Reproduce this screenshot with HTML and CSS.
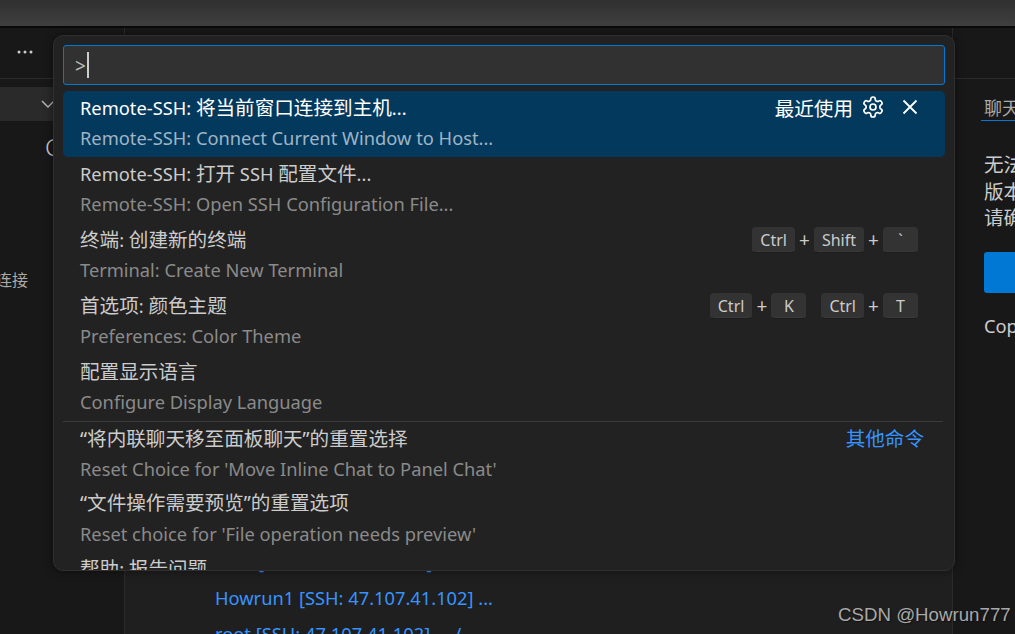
FILE: index.html
```html
<!DOCTYPE html>
<html lang="zh">
<head>
<meta charset="utf-8">
<title>Command Palette</title>
<link rel="stylesheet" href="styles.css">
</head>
<body>
<div class="app">
  <div class="titlebar"></div>
  <div class="workbench">
    <aside class="sidebar">
      <div class="side-head"><svg class="dots" viewBox="0 0 16 4"><circle cx="2" cy="2" r="1.5"/><circle cx="8" cy="2" r="1.5"/><circle cx="14" cy="2" r="1.5"/></svg></div>
      <div class="side-section"><svg class="chev" viewBox="0 0 16 16"><path d="M2 5l6 6 6-6"/></svg></div>
      <div class="side-c">C</div>
      <div class="side-link">连接</div>
    </aside>
    <main class="editor">
      <div class="editor-head"></div>
      <div class="links">
        <div class="link first">[SSH: 47.107.41.102] ...</div>
        <div class="link">Howrun1 [SSH: 47.107.41.102] ...</div>
        <div class="link">root [SSH: 47.107.41.102] ... /</div>
      </div>
    </main>
    <aside class="chat">
      <div class="chat-head"></div>
      <div class="chat-tab">聊天</div>
      <p class="chat-text">无法<br>版本<br>请确</p>
      <div class="chat-btn"></div>
      <p class="chat-cop">Cop</p>
    </aside>
  </div>

  <section class="palette">
    <div class="input"><span class="prompt">&gt;</span><span class="caret"></span></div>
    <div class="list">
      <div class="row selected">
        <div class="line"><span class="title">Remote-SSH: <span class="zh">将当前窗口连接到主机</span>...</span>
          <span class="meta"><span class="zh">最近使用</span>
            <svg class="gear" viewBox="0 0 24 24"><path d="M12.22 2h-.44a2 2 0 0 0-2 2v.18a2 2 0 0 1-1 1.73l-.43.25a2 2 0 0 1-2 0l-.15-.08a2 2 0 0 0-2.73.73l-.22.38a2 2 0 0 0 .73 2.73l.15.1a2 2 0 0 1 1 1.72v.51a2 2 0 0 1-1 1.74l-.15.09a2 2 0 0 0-.73 2.73l.22.38a2 2 0 0 0 2.73.73l.15-.08a2 2 0 0 1 2 0l.43.25a2 2 0 0 1 1 1.73V20a2 2 0 0 0 2 2h.44a2 2 0 0 0 2-2v-.18a2 2 0 0 1 1-1.73l.43-.25a2 2 0 0 1 2 0l.15.08a2 2 0 0 0 2.73-.73l.22-.39a2 2 0 0 0-.73-2.73l-.15-.08a2 2 0 0 1-1-1.74v-.5a2 2 0 0 1 1-1.74l.15-.09a2 2 0 0 0 .73-2.73l-.22-.38a2 2 0 0 0-2.73-.73l-.15.08a2 2 0 0 1-2 0l-.43-.25a2 2 0 0 1-1-1.73V4a2 2 0 0 0-2-2z"/><circle cx="12" cy="12" r="3"/></svg>
            <svg class="close" viewBox="0 0 16 16"><path d="M1.5 1.5l13 13M14.5 1.5l-13 13"/></svg>
          </span>
        </div>
        <div class="sub">Remote-SSH: Connect Current Window to Host...</div>
      </div>
      <div class="row">
        <div class="line"><span class="title">Remote-SSH: <span class="zh">打开</span> SSH <span class="zh">配置文件</span>...</span></div>
        <div class="sub">Remote-SSH: Open SSH Configuration File...</div>
      </div>
      <div class="row">
        <div class="line"><span class="title"><span class="zh">终端</span>: <span class="zh">创建新的终端</span></span>
          <span class="keys"><kbd class="key">Ctrl</kbd><i>+</i><kbd class="key">Shift</kbd><i>+</i><kbd class="key tick">`</kbd></span>
        </div>
        <div class="sub">Terminal: Create New Terminal</div>
      </div>
      <div class="row">
        <div class="line"><span class="title"><span class="zh">首选项</span>: <span class="zh">颜色主题</span></span>
          <span class="keys"><kbd class="key">Ctrl</kbd><i>+</i><kbd class="key tick">K</kbd><b class="chord"></b><kbd class="key">Ctrl</kbd><i>+</i><kbd class="key tick">T</kbd></span>
        </div>
        <div class="sub">Preferences: Color Theme</div>
      </div>
      <div class="row">
        <div class="line"><span class="title zh">配置显示语言</span></div>
        <div class="sub">Configure Display Language</div>
      </div>
      <div class="row separated">
        <div class="line"><span class="title zh">“将内联聊天移至面板聊天”的重置选择</span><span class="more zh">其他命令</span></div>
        <div class="sub">Reset Choice for 'Move Inline Chat to Panel Chat'</div>
      </div>
      <div class="row">
        <div class="line"><span class="title zh">“文件操作需要预览”的重置选项</span></div>
        <div class="sub">Reset choice for 'File operation needs preview'</div>
      </div>
      <div class="row">
        <div class="line"><span class="title"><span class="zh">帮助</span>: <span class="zh">报告问题</span></span></div>
      </div>
    </div>
  </section>

  <div class="watermark">CSDN @Howrun777</div>
</div>
</body>
</html>
```
FILE: styles.css
```css
* { box-sizing: border-box; }
html, body { margin: 0; height: 100%; background: #181818; overflow: hidden; }
body { font-family: "Noto Sans", "Noto Sans CJK SC", sans-serif; }

.app { position: relative; width: 1015px; height: 634px; overflow: hidden; display: flex; flex-direction: column; }

.zh { font-size: 19.6px; }

.titlebar { height: 28px; flex: none; background: linear-gradient(#303030, #3f3f3f); border-bottom: 2px solid #0a0a0a; }

.workbench { flex: 1; display: grid; grid-template-columns: 125px 828px 1fr; min-height: 0; }

.sidebar { background: #181818; border-right: 1px solid #2b2b2b; color: #ccc; overflow: hidden; }
.side-head { height: 51px; border-bottom: 1px solid #2b2b2b; padding: 22px 0 0 17px; }
.dots { display: block; width: 16px; height: 4px; fill: #ccc; }
.side-section { height: 34px; margin-top: 8px; background: #2a2a2a; display: flex; align-items: center; justify-content: flex-end; padding-right: 68px; }
.chev { width: 16px; height: 16px; fill: none; stroke: #bbb; stroke-width: 1.4; }
.side-c { font-size: 24px; line-height: 28px; padding: 12px 0 0 45px; font-weight: 300; }
.side-link { font-size: 16px; line-height: 22px; margin: 108px 0 0 -4px; color: #aaa; }

.editor { background: #1f1f1f; border-right: 1px solid #2b2b2b; }
.editor-head { height: 51px; background: #181818; border-bottom: 1px solid #2b2b2b; }
.links { padding: 465px 0 0 90px; color: #3794ff; font-size: 18.3px; }
.link { height: 36px; line-height: 36px; white-space: nowrap; }
.first { padding-left: 43px; }

.chat { background: #181818; color: #ccc; padding-left: 31px; overflow: hidden; white-space: nowrap; }
.chat-head { height: 51px; margin-left: -31px; border-bottom: 1px solid #2b2b2b; }
.chat-tab { font-size: 18px; line-height: 24px; margin-left: -3px; padding: 17px 0 0 3px; box-sizing: content-box; height: 24px; border-bottom: 1px solid #0078d4; color: #aaa; }
.chat-text { margin: 31px 0 0; font-size: 19.6px; line-height: 26.5px; }
.chat-btn { margin-top: 20px; height: 41px; background: #0078d4; border-radius: 3px 0 0 3px; }
.chat-cop { margin: 20px 0 0; font-size: 18.3px; line-height: 26px; }

.palette { position: absolute; left: 53px; top: 35px; width: 902px; height: 536px; background: #222; border: 1px solid #303030; border-radius: 10px; box-shadow: 0 0 10px rgba(0,0,0,.5); padding: 9px; overflow: hidden; }

.input { height: 40px; background: #313131; border: 1px solid #0078d4; border-radius: 3px; display: flex; align-items: center; padding-left: 11px; color: #bbb; font-size: 19px; }
.prompt { padding-top: 2px; }
.caret { width: 2px; height: 26px; background: #ccc; margin-left: 1px; }

.list { margin-top: 6px; }
.row { height: 66px; padding: 2px 17px 0; border-radius: 5px; color: #ccc; }
.row.selected { background: #04395e; color: #fff; }
.row.separated { position: relative; height: 65.5px; padding-top: 3px; }
.row.separated::before { content: ""; position: absolute; left: 0; right: 2px; top: 0; height: 1px; background: #3a3a3a; }

.line { display: flex; justify-content: space-between; align-items: center; height: 30px; padding-bottom: 4px; font-size: 18.3px; white-space: nowrap; }
.sub { height: 30px; line-height: 30px; font-size: 18.3px; color: #8a8a8a; white-space: nowrap; }
.selected .sub { color: #9fb4c4; }

.meta { display: flex; align-items: center; color: #fff; margin-right: 10px; padding-top: 2px; }
.gear { width: 24px; height: 24px; margin-left: 8px; fill: none; stroke: #fff; stroke-width: 1.7; stroke-linecap: round; stroke-linejoin: round; }
.close { width: 16px; height: 16px; margin-left: 17px; fill: none; stroke: #fff; stroke-width: 1.8; }

.keys { display: flex; align-items: center; margin-right: 10px; padding-top: 4px; }
.keys i { font-style: normal; font-size: 19px; width: 19px; text-align: center; color: #ccc; }
.key { font-family: inherit; font-size: 16px; line-height: 24px; height: 26px; padding: 0 7px; background: #333; border: 1px solid #333; border-bottom-color: #1c1c1c; border-radius: 4px; color: #ccc; box-shadow: inset 0 -1px 0 #3a3a3a; }
.tick { min-width: 35px; text-align: center; }
.chord { width: 15px; }

.more { color: #3794ff; margin-right: 4px; }

.watermark { position: absolute; left: 838px; top: 604px; font-family: "Liberation Sans", sans-serif; font-size: 18.7px; line-height: 22px; color: #a8a8a8; text-shadow: 1px 1px 1px #111; white-space: nowrap; }
```
